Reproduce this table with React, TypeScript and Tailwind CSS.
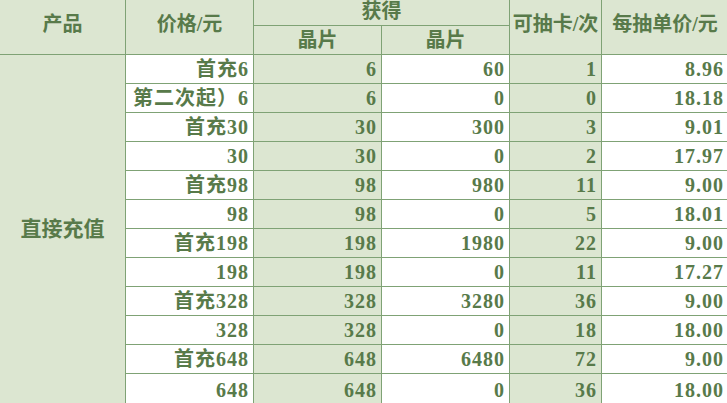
import React from 'react';

const rows: [string, string, string, string, string][] = [
  ['首充6', '6', '60', '1', '8.96'],
  ['第二次起）6', '6', '0', '0', '18.18'],
  ['首充30', '30', '300', '3', '9.01'],
  ['30', '30', '0', '2', '17.97'],
  ['首充98', '98', '980', '11', '9.00'],
  ['98', '98', '0', '5', '18.01'],
  ['首充198', '198', '1980', '22', '9.00'],
  ['198', '198', '0', '11', '17.27'],
  ['首充328', '328', '3280', '36', '9.00'],
  ['328', '328', '0', '18', '18.00'],
  ['首充648', '648', '6480', '72', '9.00'],
  ['648', '648', '0', '36', '18.00'],
];

const green = 'bg-[#dce6d1]';
const white = 'bg-white';
const line = 'border border-[#7fa275]';
const head = `${line} ${green} font-bold whitespace-nowrap px-0 pt-0 pb-[6px] leading-none`;

export default function App() {
  return (
    <div
      className="w-[727px] h-[403px] overflow-hidden bg-[#dce6d1] text-[#587a4a] font-bold"
      style={{ fontFamily: '"Liberation Serif", "Noto Sans CJK SC", serif' }}
    >
      <table className="border-collapse table-fixed w-[729px] -ml-px -mt-px text-[20px]">
        <colgroup>
          <col className="w-[126px]" />
          <col className="w-[128px]" />
          <col className="w-[128px]" />
          <col className="w-[128px]" />
          <col className="w-[92px]" />
          <col className="w-[127px]" />
        </colgroup>
        <thead>
          <tr className="h-[26px]">
            <th rowSpan={2} className={head}>产品</th>
            <th rowSpan={2} className={head}>价格/元</th>
            <th colSpan={2} className={`${line} ${green} font-bold leading-none p-0 pb-[4px]`}>获得</th>
            <th rowSpan={2} className={head}>可抽卡/次</th>
            <th rowSpan={2} className={head}>每抽单价/元</th>
          </tr>
          <tr className="h-[29px]">
            <th className={`${line} ${green} font-bold leading-none p-0`}>晶片</th>
            <th className={`${line} ${green} font-bold leading-none p-0`}>晶片</th>
          </tr>
        </thead>
        <tbody>
          {rows.map((r, i) => {
            const last = i === rows.length - 1;
            const cell = `${line} pl-[5px] pr-[4px] text-right leading-none tracking-[1px] ${
              last ? 'align-top pt-[6px] pb-0' : 'py-0'
            }`;
            return (
              <tr key={i} className={last ? 'h-[36px]' : 'h-[29px]'}>
                {i === 0 && (
                  <td rowSpan={12} className={`${line} ${green} text-center align-middle text-[21px] pb-[4px]`}>
                    直接充值
                  </td>
                )}
                <td className={`${cell} ${white} whitespace-nowrap`}>{r[0]}</td>
                <td className={`${cell} ${green}`}>{r[1]}</td>
                <td className={`${cell} ${white}`}>{r[2]}</td>
                <td className={`${cell} ${green}`}>{r[3]}</td>
                <td className={`${cell} ${white}`}>{r[4]}</td>
              </tr>
            );
          })}
        </tbody>
      </table>
    </div>
  );
}
